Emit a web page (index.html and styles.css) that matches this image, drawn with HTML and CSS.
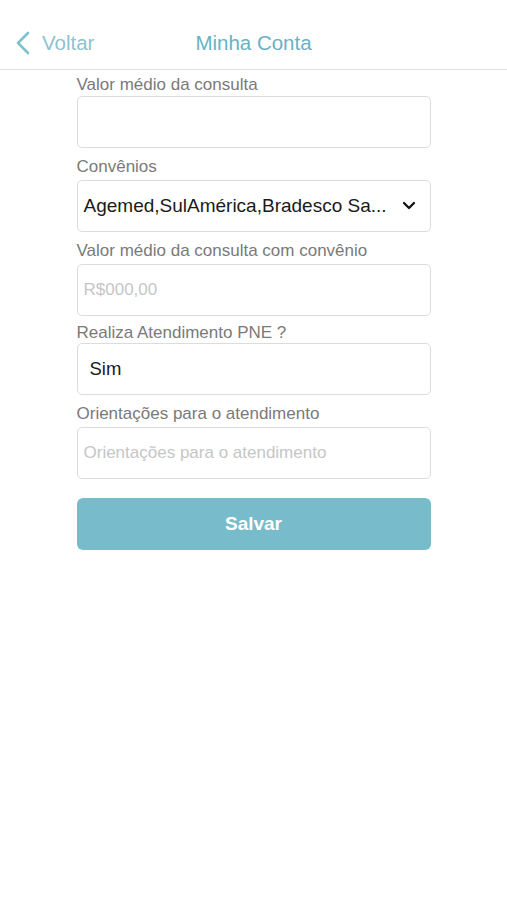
FILE: index.html
```html
<!DOCTYPE html>
<html lang="pt-BR">
<head>
    <meta charset="UTF-8">
    <meta name="viewport" content="width=device-width, initial-scale=1.0">
    <title>Minha Conta</title>
    <link rel="stylesheet" href="styles.css">
</head>
<body>

<header class="navbar">
    <a class="back" href="#">
        <svg class="back-icon" width="16" height="24" viewBox="0 0 16 24">
            <path d="M13 2 L3 12 L13 22" fill="none" stroke="#7fc0cf" stroke-width="2.6" stroke-linecap="round" stroke-linejoin="round"/>
        </svg>
        <span>Voltar</span>
    </a>
    <h1 class="title">Minha Conta</h1>
</header>

<form class="form">
    <label class="label" for="valor">Valor médio da consulta</label>
    <input class="field" type="text" id="valor">

    <label class="label" for="convenios">Convênios</label>
    <div class="field select" id="convenios">
        <span class="select-text">Agemed,SulAmérica,Bradesco Sa...</span>
        <svg width="14" height="10" viewBox="0 0 14 10">
            <path d="M2 2 L7 7 L12 2" fill="none" stroke="#111" stroke-width="2.3" stroke-linecap="round" stroke-linejoin="round"/>
        </svg>
    </div>

    <label class="label" for="valorConvenio">Valor médio da consulta com convênio</label>
    <input class="field" type="text" id="valorConvenio" placeholder="R$000,00">

    <label class="label tight" for="pne">Realiza Atendimento PNE ?</label>
    <div class="field value" id="pne">Sim</div>

    <label class="label" for="orientacoes">Orientações para o atendimento</label>
    <input class="field" type="text" id="orientacoes" placeholder="Orientações para o atendimento">

    <button class="save" type="button">Salvar</button>
</form>

</body>
</html>
```

FILE: styles.css
```css
body {
    margin: 0;
    font-family: "Liberation Sans", Arial, sans-serif;
    background: #fff;
}
.navbar {
    position: relative;
    height: 70px;
    border-bottom: 1px solid #e2e2e2;
    display: flex;
    align-items: center;
    justify-content: center;
    box-sizing: border-box;
    padding-top: 17px;
}
.back {
    position: absolute;
    left: 15px;
    top: 31px;
    display: flex;
    align-items: center;
    gap: 11px;
    color: #8cc3d0;
    text-decoration: none;
    font-size: 20.5px;
}
.back-icon {
    display: block;
}
.title {
    margin: 0;
    font-size: 20.5px;
    font-weight: normal;
    color: #66b3c5;
}
.form {
    width: 354px;
    margin: 0 auto;
    padding-top: 5px;
    display: flex;
    flex-direction: column;
}
.label {
    font-size: 17px;
    color: #7a7a7a;
    line-height: 20px;
    margin: 9px 0 3px;
}
.label:first-child {
    margin: 0 0 1px;
}
.label.tight {
    margin: 7px 0 0;
}
.field {
    box-sizing: border-box;
    height: 52px;
    border: 1px solid #dcdcdc;
    border-radius: 5px;
    padding: 0 6px;
    font-family: inherit;
    font-size: 17px;
    margin: 0;
    outline: none;
    background: #fff;
}
.field::placeholder {
    color: #c6c6c6;
}
.select {
    display: flex;
    align-items: center;
    justify-content: space-between;
    padding-right: 14px;
    font-size: 19px;
    color: #1a1a1a;
}
.value {
    display: flex;
    align-items: center;
    padding-left: 12px;
    font-size: 18.5px;
    color: #1a1a1a;
}
.save {
    margin-top: 19px;
    height: 52px;
    border: none;
    border-radius: 6px;
    background: #78bbca;
    color: #fff;
    font-family: inherit;
    font-size: 19px;
    font-weight: bold;
    cursor: pointer;
}
```
